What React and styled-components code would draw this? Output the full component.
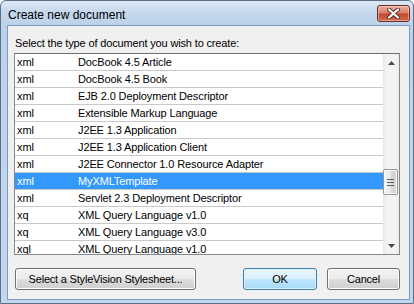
import React from "react";
import styled, { createGlobalStyle } from "styled-components";

const GlobalStyle = createGlobalStyle`
  body {
    margin: 0;
    overflow: hidden;
    font-family: "Liberation Sans", Arial, sans-serif;
  }
`

const documents = [
  ["xml", "DocBook 4.5 Article"],
  ["xml", "DocBook 4.5 Book"],
  ["xml", "EJB 2.0 Deployment Descriptor"],
  ["xml", "Extensible Markup Language"],
  ["xml", "J2EE 1.3 Application"],
  ["xml", "J2EE 1.3 Application Client"],
  ["xml", "J2EE Connector 1.0 Resource Adapter"],
  ["xml", "MyXMLTemplate"],
  ["xml", "Servlet 2.3 Deployment Descriptor"],
  ["xq", "XML Query Language v1.0"],
  ["xq", "XML Query Language v3.0"],
  ["xql", "XML Query Language v1.0"],
];

const Window = styled.div`
  box-sizing: border-box;
  display: flex;
  flex-direction: column;
  width: 414px;
  height: 304px;
  padding: 0 3px 3px 6px;
  border: 1px solid #5a6f88;
  border-radius: 6px 6px 0 0;
  background: linear-gradient(#dce8f5 0px, #c4d7ed 12px, #bdd2ea 24px, #c3d6ec 100%);
`
const TitleBar = styled.div`
  display: flex;
  justify-content: space-between;
  align-items: flex-start;
  height: 24px;
  padding: 4px 0 0 1px;
  box-sizing: border-box;
`
const Title = styled.div`
  margin-top: 3px;
  font-size: 12px;
  line-height: 14px;
  color: #000;
`
const CloseButton = styled.div`
  display: flex;
  align-items: center;
  justify-content: center;
  width: 33px;
  height: 17px;
  box-sizing: border-box;
  border: 1px solid #6e2a20;
  border-radius: 3px;
  background: linear-gradient(#eab2a4 0%, #d97e68 45%, #c24a33 55%, #cf6a4e 100%);
  box-shadow: inset 0 0 0 1px rgba(255, 220, 210, 0.5);
`
const Client = styled.div`
  flex: 1;
  display: flex;
  flex-direction: column;
  padding: 11px 9px 0 6px;
  background: #f0f0f0;
  border: 1px solid #7a9cc4;
`
const Label = styled.div`
  padding-left: 1px;
  font-size: 11px;
  line-height: 13px;
  letter-spacing: -0.15px;
  color: #000;
`
const ListBox = styled.div`
  display: flex;
  width: 386px;
  height: 202px;
  margin-top: 3px;
  box-sizing: border-box;
  border: 1px solid #828790;
  border-top-color: #6e6e6e;
  background: #fff;
`
const Rows = styled.div`
  flex: 1;
  overflow: hidden;
`
const Row = styled.div`
  display: flex;
  align-items: center;
  height: 16px;
  border-bottom: 1px solid #c9c9c9;
  font-size: 11px;
  letter-spacing: -0.12px;
  color: ${p => (p.selected ? "#fff" : "#000")};
  background: ${p => (p.selected ? "#3399ff" : "transparent")};
  white-space: nowrap;
`
const TypeCell = styled.div`
  width: 61px;
  padding-left: 2px;
`
const NameCell = styled.div`
  flex: 1;
`
const ScrollBar = styled.div`
  display: flex;
  flex-direction: column;
  width: 16px;
  background: linear-gradient(to right, #e4e4e4 0px, #f2f2f2 3px, #f4f4f4 12px, #ebebeb 16px);
`
const ArrowButton = styled.div`
  display: flex;
  align-items: center;
  justify-content: center;
  height: 17px;
`
const Track = styled.div`
  flex: 1;
  display: flex;
  flex-direction: column;
`
const Thumb = styled.div`
  display: flex;
  align-items: center;
  justify-content: center;
  height: 26px;
  margin: ${p => p.offset}px 1px 0 0;
  box-sizing: border-box;
  border: 1px solid #979797;
  border-radius: 2px;
  background: linear-gradient(to right, #f3f3f3 0%, #e9e9e9 50%, #d8d8d8 51%, #d2d2d2 100%);
  box-shadow: inset 0 0 0 1px #fafafa;
`
const ButtonRow = styled.div`
  display: flex;
  align-items: center;
  width: 385px;
  margin-top: 13px;
  padding-left: 1px;
`
const Button = styled.div`
  display: flex;
  align-items: center;
  justify-content: center;
  width: ${p => p.w}px;
  height: 22px;
  margin-left: ${p => p.ml || 0}px;
  box-sizing: border-box;
  border: 1px solid ${p => (p.primary ? "#3c7fb1" : "#707070")};
  border-radius: 3px;
  background: ${p =>
    p.primary
      ? "linear-gradient(#eaf6fd 0%, #d9f0fc 50%, #bee6fd 51%, #a7d9f5 100%)"
      : "linear-gradient(#f2f2f2 0%, #ebebeb 50%, #dddddd 51%, #cfcfcf 100%)"};
  box-shadow: inset 0 0 0 1px ${p => (p.primary ? "#dff2fc" : "#fcfcfc")};
  font-size: 11px;
  letter-spacing: -0.2px;
  color: #000;
`

const Triangle = ({ down }) => (
  <svg width="7" height="4" viewBox="0 0 7 4">
    <path d={down ? "M0 0H7L3.5 4Z" : "M0 4H7L3.5 0Z"} fill="#4a4a4a" />
  </svg>
);

const Grip = () => (
  <svg width="7" height="7" viewBox="0 0 7 7">
    <path d="M0 0.5H7M0 3.5H7M0 6.5H7" stroke="#5f5f5f" strokeWidth="1" />
  </svg>
);

const CloseGlyph = () => (
  <svg width="13" height="11" viewBox="0 0 13 11">
    <path
      d="M2 1.5L11 9.5M11 1.5L2 9.5"
      stroke="#5b2a22"
      strokeWidth="4"
      strokeLinecap="round"
    />
    <path d="M2 1.5L11 9.5M11 1.5L2 9.5" stroke="#fff" strokeWidth="2.2" strokeLinecap="round" />
  </svg>
);

export default function App() {
  const selected = 7;
  return (
    <>
      <GlobalStyle />
      <Window>
        <TitleBar>
          <Title>Create new document</Title>
          <CloseButton>
            <CloseGlyph />
          </CloseButton>
        </TitleBar>
        <Client>
          <Label>Select the type of document you wish to create:</Label>
          <ListBox>
            <Rows>
              {documents.map(([type, name], i) => (
                <Row key={i} selected={i === selected}>
                  <TypeCell>{type}</TypeCell>
                  <NameCell>{name}</NameCell>
                </Row>
              ))}
            </Rows>
            <ScrollBar>
              <ArrowButton>
                <Triangle />
              </ArrowButton>
              <Track>
                <Thumb offset={98}>
                  <Grip />
                </Thumb>
              </Track>
              <ArrowButton>
                <Triangle down />
              </ArrowButton>
            </ScrollBar>
          </ListBox>
          <ButtonRow>
            <Button w={181}>Select a StyleVision Stylesheet...</Button>
            <Button w={74} ml={47} primary>OK</Button>
            <Button w={73} ml={10}>Cancel</Button>
          </ButtonRow>
        </Client>
      </Window>
    </>
  );
}
